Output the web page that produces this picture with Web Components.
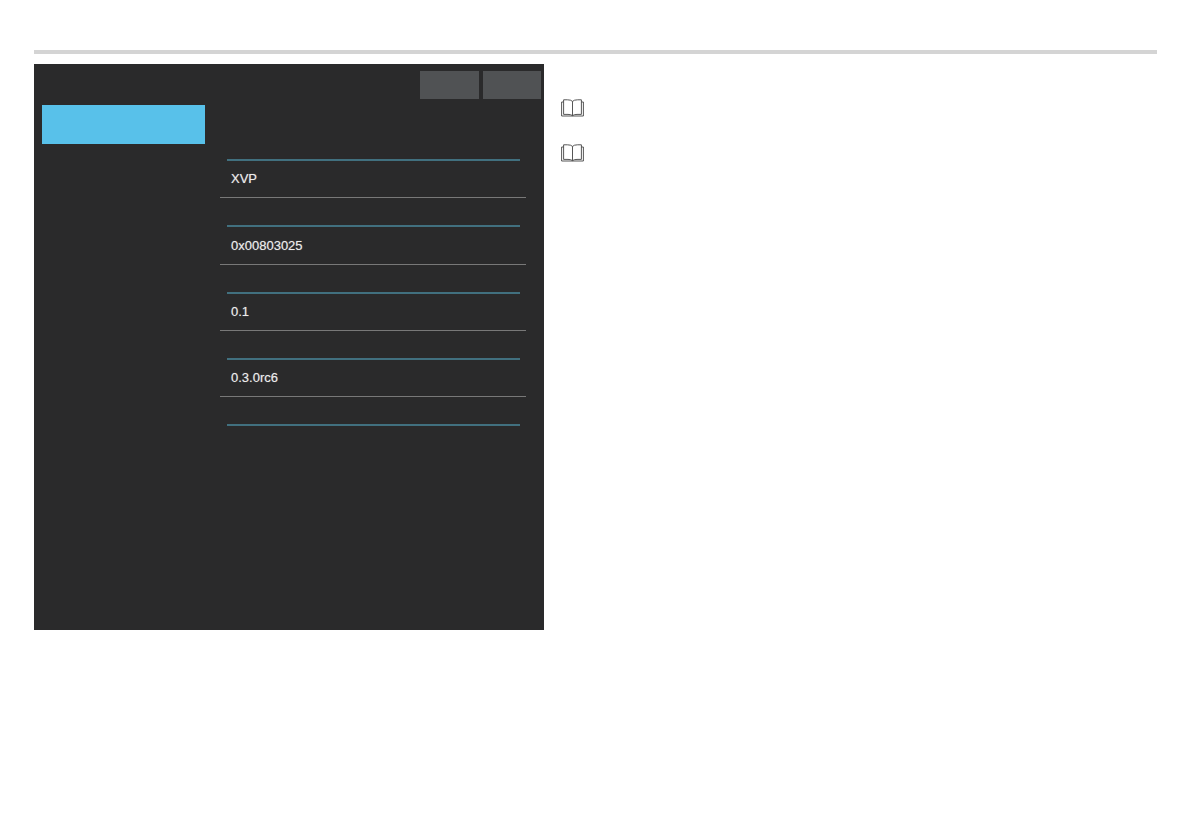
<!DOCTYPE html>
<html>
<head>
<meta charset="utf-8">
<title>Device info</title>
<style>
  html, body { margin: 0; background: #fff; }
  body { font-family: "Liberation Sans", Arial, sans-serif; }
</style>
</head>
<body>
<manual-page>
  <device-panel slot="shot">
    <info-row>XVP</info-row>
    <info-row>0x00803025</info-row>
    <info-row>0.1</info-row>
    <info-row>0.3.0rc6</info-row>
    <info-row last></info-row>
  </device-panel>
  <book-note slot="notes"></book-note>
  <book-note slot="notes"></book-note>
</manual-page>

<script>
// page frame: grey rule on top, screenshot left, notes right
class ManualPage extends HTMLElement {
  constructor() {
    super();
    this.attachShadow({ mode: 'open' });
    this.shadowRoot.innerHTML = `
      <style>
        :host { display: block; padding: 50px 34px 0; }
        .rule { height: 4px; background: #d4d4d4; margin-bottom: 10px; }
        .body { display: flex; }
        .notes { display: flex; flex-direction: column; gap: 27px; margin-left: 17px; padding-top: 35px; }
      </style>
      <div class="rule"></div>
      <div class="body">
        <slot name="shot"></slot>
        <div class="notes"><slot name="notes"></slot></div>
      </div>
    `;
  }
}

class DevicePanel extends HTMLElement {
  constructor() {
    super();
    this.attachShadow({ mode: 'open' });
    this.shadowRoot.innerHTML = `
      <style>
        :host { display: block; width: 510px; height: 566px; background: #2a2a2b; box-sizing: border-box; padding: 7px 3px 0 8px; flex: none; }
        .toolbar { display: flex; justify-content: flex-end; gap: 4px; }
        .toolbar span { display: block; width: 58.5px; height: 28px; background: #505254; }
        .main { display: flex; }
        .side { width: 163px; padding-top: 5.5px; }
        .active { height: 39px; background: #58c1ea; }
        .rows { width: 306px; margin-left: 15px; padding-top: 60px; }
      </style>
      <div class="toolbar"><span></span><span></span></div>
      <div class="main">
        <div class="side"><div class="active"></div></div>
        <div class="rows"><slot></slot></div>
      </div>
    `;
  }
}

class InfoRow extends HTMLElement {
  constructor() {
    super();
    this.attachShadow({ mode: 'open' });
    this.shadowRoot.innerHTML = `
      <style>
        :host { display: block; height: 66.33px; color: #ececec; font-size: 13px; text-shadow: 0 0 1px rgba(255,255,255,.45); }
        .top { border-top: 2px solid #41707f; margin: 0 6.5px; }
        .value { height: 25.97px; padding-top: 10.43px; line-height: 15px; padding-left: 11px; }
        .bottom { border-top: 1px solid #787878; }
        :host([last]) .value, :host([last]) .bottom { display: none; }
      </style>
      <div class="top"></div>
      <div class="value"><slot></slot></div>
      <div class="bottom"></div>
    `;
  }
}

class BookNote extends HTMLElement {
  constructor() {
    super();
    this.attachShadow({ mode: 'open' });
    this.shadowRoot.innerHTML = `
      <style>
        :host { display: block; width: 23px; height: 18px; }
        svg { display: block; }
      </style>
      <svg width="23" height="18" viewBox="0 0 23 18" fill="none" stroke="#444" stroke-width="0.9">
        <path d="M2.6 3H0.6V17H10Q11.5 17 13 17H22.4V3H20.4"/>
        <path d="M11.5 2.4Q10 0.8 6.5 0.8H2.6V15.4H7Q10 15.4 11.5 16.6Q13 15.4 16 15.4H20.4V0.8H16.5Q13 0.8 11.5 2.4Z"/>
        <path d="M11.5 2.4V16.6"/>
      </svg>
    `;
  }
}

customElements.define('manual-page', ManualPage);
customElements.define('device-panel', DevicePanel);
customElements.define('info-row', InfoRow);
customElements.define('book-note', BookNote);
</script>
</body>
</html>
